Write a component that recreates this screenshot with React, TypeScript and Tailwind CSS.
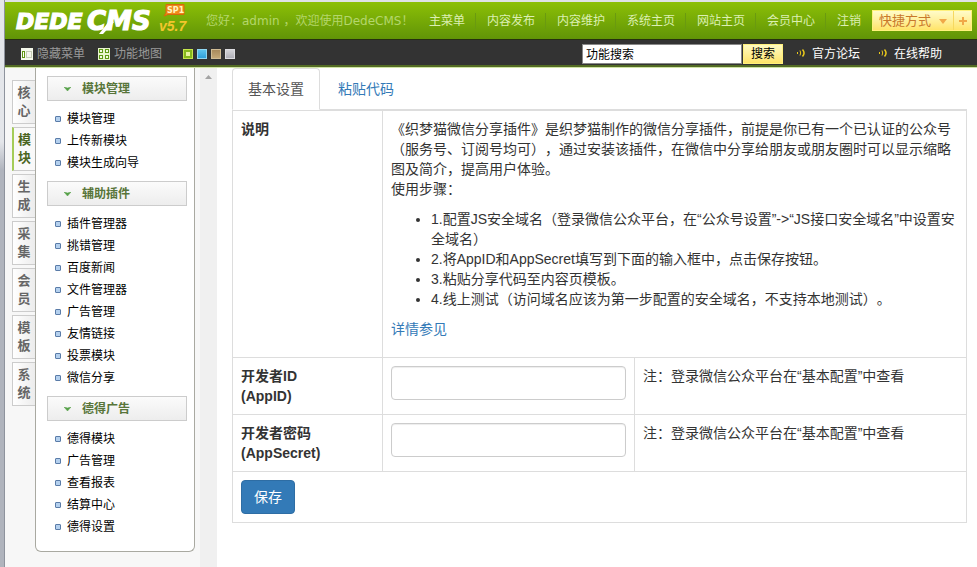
import { useState } from 'react'
import clsx from 'clsx'

interface MenuGroup {
    title: string
    items: string[]
}

const NAV_LINKS = ['主菜单', '内容发布', '内容维护', '系统主页', '网站主页', '会员中心', '注销']

const SIDE_TABS = ['核心', '模块', '生成', '采集', '会员', '模板', '系统']

const MENU_GROUPS: MenuGroup[] = [
    { title: '模块管理', items: ['模块管理', '上传新模块', '模块生成向导'] },
    {
        title: '辅助插件',
        items: ['插件管理器', '挑错管理', '百度新闻', '文件管理器', '广告管理', '友情链接', '投票模块', '微信分享']
    },
    { title: '德得广告', items: ['德得模块', '广告管理', '查看报表', '结算中心', '德得设置'] }
]

const SKINS = [
    { name: '绿色', className: 'bg-[#86b81c] border-[#c6e64c]' },
    { name: '蓝色', className: 'bg-linear-to-b from-[#5cc4ee] to-[#2ea0da] border-[#8fd6f2]' },
    { name: '棕色', className: 'bg-linear-to-b from-[#a88a5c] to-[#c4a878] border-[#d0bc94]' },
    { name: '灰色', className: 'bg-linear-to-b from-[#d4d4d8] to-[#b0b0b8] border-[#dcdce0]' }
]

const STEPS = [
    '1.配置JS安全域名（登录微信公众平台，在“公众号设置”->“JS接口安全域名”中设置安全域名）',
    '2.将AppID和AppSecret填写到下面的输入框中，点击保存按钮。',
    '3.粘贴分享代码至内容页模板。',
    '4.线上测试（访问域名应该为第一步配置的安全域名，不支持本地测试）。'
]

function Logo() {
    return (
        <svg width="184" height="37" viewBox="0 0 184 37" role="img" aria-label="DEDECMS v5.7 SP1">
            <g fill="#fff" stroke="#fff" strokeWidth="1.2" fontFamily="'DejaVu Sans', sans-serif" fontWeight="700" fontStyle="italic">
                <text x="11" y="27" fontSize="22">DEDE</text>
                <text x="82" y="28" fontSize="26">CMS</text>
            </g>
            <path d="M105 18 L94 32 L98 32 L109 20 Z" fill="#fff" />
            <text x="154" y="29" fontSize="14" fontFamily="'Liberation Sans', sans-serif" fontWeight="700" fontStyle="italic" fill="#f2c62c">v5.7</text>
            <path d="M161 2.5 H179 V12.5 H163 L159 14 L161 11 Z" fill="#f08a1c" stroke="#d8680c" />
            <text x="162" y="11" fontSize="8" fontFamily="'DejaVu Sans', sans-serif" fontWeight="700" fill="#fff6c0">SP1</text>
        </svg>
    )
}

function HideMenuIcon() {
    return (
        <svg width="12" height="12" viewBox="0 0 12 12" aria-hidden="true">
            <rect width="12" height="12" fill="#f4f8ea" />
            <rect x="1.5" y="3.5" width="2" height="6" fill="#fff" stroke="#5f9410" />
            <rect x="5.5" y="3.5" width="5" height="6" fill="#f4f4ec" stroke="#c4ccb4" />
        </svg>
    )
}

function MapIcon() {
    return (
        <svg width="12" height="12" viewBox="0 0 12 12" aria-hidden="true">
            <rect width="12" height="12" fill="#e8f4cc" />
            <g fill="#f4fae4" stroke="#5f9a14">
                <rect x="1.5" y="1.5" width="3" height="3" />
                <rect x="7.5" y="1.5" width="3" height="3" />
                <rect x="1.5" y="7.5" width="3" height="3" />
                <rect x="7.5" y="7.5" width="3" height="3" />
            </g>
        </svg>
    )
}

function SoundIcon() {
    return (
        <svg width="9" height="9" viewBox="0 0 9 9" aria-hidden="true" fill="none" stroke="#e8c81c">
            <path d="M0.5 3 V5" />
            <path d="M3 1.5 Q4.4 4 3 6.5" />
            <path d="M5.5 0.5 Q8.6 4 5.5 7.5" strokeWidth="1.5" />
        </svg>
    )
}

function TopHeader() {
    return (
        <header className="flex h-[37px] items-center bg-linear-to-b from-[#8cc006] to-[#619407] text-xs">
            <a href="#home" className="shrink-0">
                <Logo />
            </a>
            <p className="ml-[17px] pt-px whitespace-nowrap text-[#b4d66c]">您好：admin ，欢迎使用DedeCMS！</p>
            <nav className="ml-auto flex items-center pt-px whitespace-nowrap">
                {NAV_LINKS.map((label, i) => (
                    <a
                        key={label}
                        href="#nav"
                        className={clsx('px-[11px] text-[#dcefb2] hover:text-white', i > 0 && 'shadow-[-1px_0_0_#6a9a10]')}
                    >
                        {label}
                    </a>
                ))}
            </nav>
            <div className="mr-[5px] flex h-[21px] shrink-0 border border-[#fff27c] bg-linear-to-b from-[#fffbc8] to-[#ffe468] text-[13px] text-[#c8782c]">
                <div className="relative flex">
                    <select aria-label="快捷方式" className="w-20 appearance-none pl-[6px] leading-[19px]">
                        <option>快捷方式</option>
                    </select>
                    <svg width="8" height="5" viewBox="0 0 8 5" className="pointer-events-none absolute top-2 right-[6px]" aria-hidden="true">
                        <path d="M0 0 H8 L4 5 Z" fill="#f0a848" />
                    </svg>
                </div>
                <button aria-label="添加快捷方式" className="flex w-[18px] items-center justify-center border-l border-[#f6d860]">
                    <svg width="8" height="8" viewBox="0 0 8 8" aria-hidden="true">
                        <path d="M4 0 V8 M0 4 H8" stroke="#f0a848" strokeWidth="2" />
                    </svg>
                </button>
            </div>
        </header>
    )
}

function Toolbar() {
    return (
        <div className="flex h-[26px] items-center border-t border-[#26300f] bg-[#333] px-4 pt-[2px] text-xs whitespace-nowrap">
            <a href="#hide" className="flex items-center gap-1 text-[#999]">
                <HideMenuIcon />
                隐藏菜单
            </a>
            <a href="#map" className="ml-[13px] flex items-center gap-1 text-[#999]">
                <MapIcon />
                功能地图
            </a>
            <div className="ml-[21px] flex gap-1">
                {SKINS.map((skin) => (
                    <button key={skin.name} aria-label={skin.name} className={clsx('flex size-[10px] items-center justify-center border', skin.className)}>
                        {skin.name === '绿色' && <span className="h-1 w-1 bg-[#e8f49c]" />}
                    </button>
                ))}
            </div>
            <form className="ml-auto flex gap-px" onSubmit={(e) => e.preventDefault()}>
                <input
                    type="text"
                    aria-label="功能搜索"
                    defaultValue="功能搜索"
                    className="h-5 w-40 border border-[#888] bg-white px-[3px] text-black outline-none"
                />
                <button type="submit" className="h-5 w-10 border border-[#fff07c] bg-linear-to-b from-[#fffac0] to-[#ffe468] text-black">
                    搜索
                </button>
            </form>
            <div className="mr-[19px] ml-[14px] flex gap-[19px] text-white">
                <a href="#forum" className="flex items-center gap-[6px]">
                    <SoundIcon />
                    官方论坛
                </a>
                <a href="#help" className="flex items-center gap-[6px]">
                    <SoundIcon />
                    在线帮助
                </a>
            </div>
        </div>
    )
}

function Sidebar() {
    const [activeTab, setActiveTab] = useState('模块')

    return (
        <aside className="flex shrink-0 bg-[#f7f7f7] pr-[5px] pl-[7px] text-xs">
            {/* Vertical module tabs */}
            <div className="flex w-[23px] flex-col gap-[3px] pt-3">
                {SIDE_TABS.map((tab) => (
                    <button
                        key={tab}
                        onClick={() => setActiveTab(tab)}
                        className={clsx(
                            'h-11 border border-r-0 border-[#ccc] px-1 text-[13px] leading-[18px] font-bold',
                            tab === activeTab
                                ? 'border-l-2 border-l-[#a4cc58] bg-[#f9f9f9] text-[#4a6420]'
                                : 'bg-linear-to-r from-white to-[#ececec] text-[#666]'
                        )}
                    >
                        {tab}
                    </button>
                ))}
            </div>

            {/* Menu panel */}
            <div className="w-40 self-start rounded-b-md border border-t-0 border-[#a9a9a1] bg-white pt-2 pr-[7px] pb-[13px] pl-[11px]">
                {MENU_GROUPS.map((group) => (
                    <section key={group.title} className="mb-[7px] last:mb-0">
                        <button className="flex h-[25px] w-full items-center border border-[#ccc] bg-linear-to-b from-[#fbfbfb] to-[#ededed] pl-4 text-xs font-bold text-[#58753a]">
                            <svg width="7" height="4" viewBox="0 0 7 4" className="mr-[11px]" aria-hidden="true">
                                <path d="M0 0 L3.5 1 L7 0 L3.5 4 Z" fill="#56a048" stroke="#56a048" strokeWidth="0.5" />
                            </svg>
                            {group.title}
                        </button>
                        <ul className="mt-[7px]">
                            {group.items.map((item) => (
                                <li key={item} className="flex h-[22px] items-center gap-[6px] pl-2">
                                    <span className="size-[6px] rounded-[1px] border border-[#5a7ca8] bg-[#b4d0ee]" />
                                    <a href="#item" className="text-black hover:underline">
                                        {item}
                                    </a>
                                </li>
                            ))}
                        </ul>
                    </section>
                ))}
            </div>
        </aside>
    )
}

function CredentialRow({ id, label, code }: { id: string; label: string; code: string }) {
    return (
        <tr className="align-top">
            <th scope="row" className="border border-[#ddd] p-2 text-left">
                <label htmlFor={id}>
                    {label}
                    <br />({code})
                </label>
            </th>
            <td className="border border-[#ddd] p-2">
                <input
                    id={id}
                    type="text"
                    className="block h-[34px] w-full rounded border border-[#ccc] px-3 shadow-[inset_0_1px_1px_rgba(0,0,0,0.075)] outline-none focus:border-[#66afe9]"
                />
            </td>
            <td className="border border-[#ddd] p-2">注：登录微信公众平台在“基本配置”中查看</td>
        </tr>
    )
}

function SettingsTable() {
    return (
        <table className="w-full table-fixed border-collapse border border-[#ddd]">
            <colgroup>
                <col className="w-[150px]" />
                <col className="w-[252px]" />
                <col />
            </colgroup>
            <tbody>
                <tr className="align-top">
                    <th scope="row" className="border border-[#ddd] p-2 text-left">
                        说明
                    </th>
                    <td colSpan={2} className="border border-[#ddd] p-2">
                        <p>
                            《织梦猫微信分享插件》是织梦猫制作的微信分享插件，前提是你已有一个已认证的公众号（服务号、订阅号均可），通过安装该插件，在微信中分享给朋友或朋友圈时可以显示缩略图及简介，提高用户体验。
                            <br />
                            使用步骤：
                        </p>
                        <ul className="my-[10px] list-disc pl-10">
                            {STEPS.map((step) => (
                                <li key={step}>{step}</li>
                            ))}
                        </ul>
                        <p className="mb-[10px]">
                            <a href="#detail" className="text-[#337ab7] hover:underline">
                                详情参见
                            </a>
                        </p>
                    </td>
                </tr>
                <CredentialRow id="appid" label="开发者ID" code="AppID" />
                <CredentialRow id="appsecret" label="开发者密码" code="AppSecret" />
                <tr>
                    <td colSpan={3} className="border border-[#ddd] p-2">
                        <button type="submit" className="block h-[34px] rounded border border-[#2e6da4] bg-[#337ab7] px-3 text-white hover:bg-[#286090]">
                            保存
                        </button>
                    </td>
                </tr>
            </tbody>
        </table>
    )
}

export default function App() {
    const [tab, setTab] = useState('基本设置')

    return (
        <div className="flex min-h-screen bg-white font-['DejaVu_Sans','Noto_Sans_CJK_SC',sans-serif] [text-spacing-trim:space-all]">
            {/* Window edge */}
            <div className="w-[5px] shrink-0 border-r border-[#8e939d] bg-linear-to-b from-[#e4e6ea] from-25% to-[#b0b4bd] to-30%" />

            <div className="flex min-w-0 grow flex-col border-t-2 border-[#dfe2e6]">
                <TopHeader />
                <Toolbar />
                <div className="h-[3px] shrink-0 border-b border-[#cfe3a4] bg-[#536b24]" />

                <div className="flex grow">
                    <Sidebar />

                    {/* Scrollbar track */}
                    <div className="w-[17px] shrink-0 bg-[#f0f0f0] pt-[7px]">
                        <svg width="7" height="4" viewBox="0 0 7 4" className="mx-auto" aria-hidden="true">
                            <path d="M3.5 0 L7 4 H0 Z" fill="#a3a3a3" />
                        </svg>
                    </div>

                    <main className="min-w-0 grow pr-[10px] pl-[15px] font-['Liberation_Sans','Noto_Sans_CJK_SC',sans-serif] text-sm leading-5 text-[#333]">
                        <div role="tablist" className="flex gap-[2px] border-b border-[#ddd]">
                            {['基本设置', '粘贴代码'].map((name) => (
                                <button
                                    key={name}
                                    role="tab"
                                    aria-selected={tab === name}
                                    onClick={() => setTab(name)}
                                    className={clsx(
                                        '-mb-px rounded-t border px-[15px] py-[10px]',
                                        tab === name
                                            ? 'border-[#ddd] border-b-white bg-white text-[#555]'
                                            : 'border-transparent text-[#337ab7]'
                                    )}
                                >
                                    {name}
                                </button>
                            ))}
                        </div>
                        <form onSubmit={(e) => e.preventDefault()}>
                            <SettingsTable />
                        </form>
                    </main>
                </div>
            </div>
        </div>
    )
}
